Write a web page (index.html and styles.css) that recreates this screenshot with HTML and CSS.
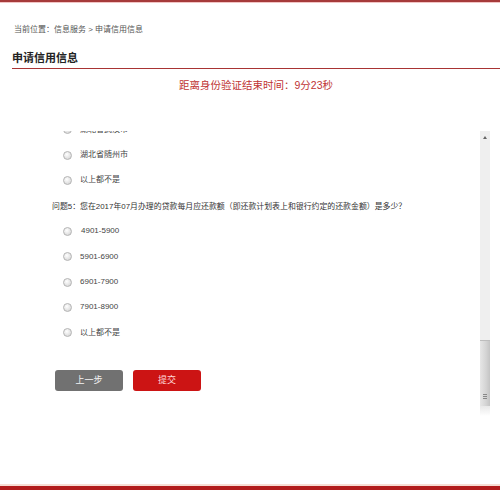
FILE: index.html
```html
<!DOCTYPE html>
<html lang="zh-CN">
<head>
<meta charset="utf-8">
<title>申请信用信息</title>
<link rel="stylesheet" href="styles.css">
</head>
<body>
<div class="page">
  <div class="topbar"></div>
  <div class="crumb">当前位置：信息服务 &gt; 申请信用信息</div>
  <div class="title">申请信用信息</div>
  <div class="timer">距离身份验证结束时间：9分23秒</div>
  <div class="scroll-area">
    <div class="scroll-view">
      <div class="scroll-content">
        <div class="opt"><span class="radio"></span><span class="label">湖北省武汉市</span></div>
        <div class="opt"><span class="radio"></span><span class="label">湖北省随州市</span></div>
        <div class="opt"><span class="radio"></span><span class="label">以上都不是</span></div>
        <div class="question">问题5：您在2017年07月办理的贷款每月应还款额（即还款计划表上和银行约定的还款金额）是多少？</div>
        <div class="opt"><span class="radio"></span><span class="label lead">4901-5900</span></div>
        <div class="opt"><span class="radio"></span><span class="label">5901-6900</span></div>
        <div class="opt"><span class="radio"></span><span class="label">6901-7900</span></div>
        <div class="opt"><span class="radio"></span><span class="label">7901-8900</span></div>
        <div class="opt"><span class="radio"></span><span class="label">以上都不是</span></div>
        <div class="buttons">
          <button class="btn btn-prev">上一步</button>
          <button class="btn btn-submit">提交</button>
        </div>
      </div>
    </div>
    <div class="scrollbar">
      <div class="sb-arrow"></div>
      <div class="sb-track"></div>
      <div class="sb-thumb"><span class="grip"></span></div>
      <div class="sb-fade"></div>
    </div>
  </div>
  <div class="bottombar"></div>
</div>
</body>
</html>
```
FILE: styles.css
```css
html, body {
  margin: 0;
  padding: 0;
  background: #ffffff;
}
body {
  font-family: "Liberation Sans", "Noto Sans CJK SC", sans-serif;
  color: #444;
}
.page {
  height: 490px;
  display: flex;
  flex-direction: column;
  overflow: hidden;
}
.topbar {
  height: 2px;
  background: #a63a3a;
  border-bottom: 1px solid #f2c4c4;
  flex: none;
}
.crumb {
  margin: 21px 0 0 14px;
  font-size: 8px;
  line-height: 12px;
  color: #555;
  flex: none;
}
.title {
  margin: 15px 0 0 12px;
  font-size: 11px;
  line-height: 14px;
  font-weight: bold;
  color: #222;
  padding-bottom: 3px;
  border-bottom: 1px solid #a83434;
  flex: none;
}
.timer {
  margin: 9px 0 0 12px;
  text-align: center;
  font-size: 10.5px;
  line-height: 14px;
  color: #c03434;
  flex: none;
}
.scroll-area {
  margin-top: 39px;
  height: 285px;
  display: flex;
  margin-right: 10px;
  flex: none;
}
.scroll-view {
  flex: 1;
  overflow: hidden;
}
.scroll-content {
  margin-top: -14px;
  padding-left: 52px;
}
.opt {
  height: 25.4px;
  display: flex;
  align-items: center;
  padding-left: 11px;
  font-size: 8px;
  color: #444;
}
.radio {
  width: 7px;
  height: 7px;
  border-radius: 50%;
  border: 1px solid #b4b4b4;
  background: radial-gradient(circle at 40% 35%, #ffffff 0%, #e2e2e2 60%, #cfcfcf 100%);
  flex: none;
}
.label {
  margin-left: 8px;
  line-height: 10px;
}
.label.lead {
  margin-left: 9px;
}
.question {
  height: 25.4px;
  display: flex;
  align-items: center;
  font-size: 7.9px;
  color: #333;
  white-space: nowrap;
}
.buttons {
  margin-top: 24px;
  padding-left: 3px;
  display: flex;
  gap: 10px;
}
.btn {
  width: 68px;
  height: 21px;
  border: none;
  border-radius: 3px;
  font-family: "Liberation Sans", "Noto Sans CJK SC", sans-serif;
  font-size: 9px;
  line-height: 21px;
  padding: 0;
  color: #f4f4f4;
}
.btn-prev {
  background: #717171;
}
.btn-submit {
  background: #cc1414;
  color: #ffd9d9;
}
.scrollbar {
  width: 10px;
  flex: none;
  display: flex;
  flex-direction: column;
  background: #ffffff;
}
.sb-arrow {
  height: 12px;
  background: #efefef;
  display: flex;
  justify-content: center;
  align-items: center;
  flex: none;
}
.sb-arrow::before {
  content: "";
  width: 0;
  height: 0;
  border-left: 2px solid transparent;
  border-right: 2px solid transparent;
  border-bottom: 3px solid #666;
}
.sb-track {
  flex: 1;
  background: #efefef;
}
.sb-thumb {
  height: 66px;
  flex: none;
  border-top: 1px solid #bdbdbd;
  background: linear-gradient(to right, #e6e6e6 0%, #d4d4d4 60%, #c4c4c4 100%);
  display: flex;
  flex-direction: column;
  justify-content: flex-end;
  align-items: center;
  padding-bottom: 7px;
  box-sizing: border-box;
}
.grip {
  width: 4px;
  height: 5px;
  background: repeating-linear-gradient(to bottom, #888 0, #888 1px, transparent 1px, transparent 2px);
}
.sb-fade {
  height: 10px;
  flex: none;
  background: linear-gradient(to bottom, #e8e8e8, #ffffff);
}
.bottombar {
  margin-top: auto;
  height: 4px;
  background: #b21c1c;
  border-top: 2px solid #f7ddd4;
  flex: none;
}
```
